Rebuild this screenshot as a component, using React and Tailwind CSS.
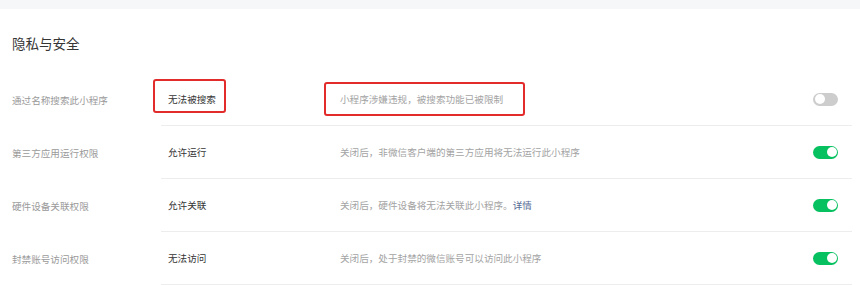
import React from "react";

const rows = [
  {
    label: "通过名称搜索此小程序",
    value: "无法被搜索",
    desc: "小程序涉嫌违规，被搜索功能已被限制",
    on: false,
    marked: true,
  },
  {
    label: "第三方应用运行权限",
    value: "允许运行",
    desc: "关闭后，非微信客户端的第三方应用将无法运行此小程序",
    on: true,
  },
  {
    label: "硬件设备关联权限",
    value: "允许关联",
    desc: "关闭后，硬件设备将无法关联此小程序。",
    link: "详情",
    on: true,
  },
  {
    label: "封禁账号访问权限",
    value: "无法访问",
    desc: "关闭后，处于封禁的微信账号可以访问此小程序",
    on: true,
  },
];

function Toggle({ on }) {
  return (
    <div
      className={
        on
          ? "w-[25px] h-[13px] rounded-full bg-[#07c160] flex items-center justify-end px-[1.5px]"
          : "w-[25px] h-[13px] rounded-full bg-[#cdcdcd] flex items-center justify-start px-[1.5px]"
      }
    >
      <div className="w-[10px] h-[10px] rounded-full bg-white" />
    </div>
  );
}

export default function App() {
  return (
    <div className="w-[860px] h-[285px] bg-white overflow-hidden font-['Noto_Sans_CJK_SC','Noto_Sans',sans-serif]">
      <div className="h-[9px] bg-[#f6f7f9]" />
      <div className="pl-[12px] pr-[8px]">
        <h2 className="pt-[22px] text-[13.5px] leading-[24px] text-[#353535]">隐私与安全</h2>
        <div className="mt-[18px]">
          {rows.map((r) => (
            <div key={r.label} className="flex items-center h-[53px] text-[9.6px] leading-[14px]">
              <div className="w-[149px] text-[#9a9a9a]">{r.label}</div>
              <div className="flex-1 h-full flex items-center border-b border-[#ededed]">
                <div className="relative w-[179px] h-full flex items-center pl-[7px] text-[#353535]">
                  {r.marked && (
                    <div className="absolute left-[-8px] top-[6px] w-[73px] h-[34px] border-2 border-[#e22b2b] rounded-[3px]" />
                  )}
                  {r.value}
                </div>
                <div className="relative flex-1 h-full flex items-center text-[#a3a3a3]">
                  {r.marked && (
                    <div className="absolute left-[-16px] top-[9px] w-[201px] h-[34px] border-2 border-[#e22b2b] rounded-[3px]" />
                  )}
                  <span>
                    {r.desc}
                    {r.link && <span className="text-[#576b95]">{r.link}</span>}
                  </span>
                </div>
                <div className="mr-[14px]">
                  <Toggle on={r.on} />
                </div>
              </div>
            </div>
          ))}
        </div>
      </div>
    </div>
  );
}
